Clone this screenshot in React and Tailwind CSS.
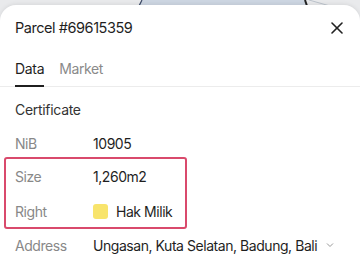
export default function App() {
  return (
    <div className="relative w-[360px] h-[270px] overflow-hidden bg-[#e9eaec]" style={{ fontFamily: "Inter, 'Noto Sans', sans-serif" }}>
      <svg className="absolute left-0 top-0" width="360" height="12" viewBox="0 0 360 12">
        <polygon points="143,0 305,0 308,6 138,6" fill="#cdd6e2" />
        <line x1="142" y1="0" x2="138" y2="8" stroke="#3b4a66" strokeWidth="1.2" />
        <line x1="305" y1="0" x2="307" y2="6" stroke="#222" strokeWidth="2" />
        <line x1="309" y1="0" x2="330" y2="6" stroke="#bcc3cc" strokeWidth="1" />
      </svg>
      <div className="absolute left-0 right-0 top-[5px] bottom-0 bg-white rounded-t-[16px] shadow-[0_-1px_4px_rgba(0,0,0,0.08)]">
        <div className="flex items-center justify-between pl-[15px] pr-[17px] h-[46px]">
          <span className="text-[14.5px] text-[#1f1f1f] tracking-[-0.45px]">Parcel #69615359</span>
          <svg width="12" height="12" viewBox="0 0 12 12" stroke="#222" strokeWidth="1.6" strokeLinecap="round">
            <line x1="1" y1="1" x2="11" y2="11" />
            <line x1="11" y1="1" x2="1" y2="11" />
          </svg>
        </div>
        <div className="flex gap-[15px] px-[15px] pt-[8px] border-b border-[#ececec]">
          <div className="flex flex-col">
            <span className="text-[14px] text-[#1f1f1f] leading-[20px] tracking-[-0.3px]">Data</span>
            <div className="h-[2px] bg-[#1f1f1f] mt-[6px] mb-[-1px]" />
          </div>
          <span className="text-[14px] text-[#8a8a8a] leading-[20px] tracking-[-0.4px]">Market</span>
        </div>
        <div className="px-[15px] pt-[13px] text-[14px] text-[#333] leading-[20px] tracking-[-0.3px]">Certificate</div>
        <div className="flex items-center pl-[15px] mt-[13px] h-[20px] text-[14px] tracking-[-0.45px]">
          <span className="w-[78px] text-[#888]">NiB</span>
          <span className="text-[#1f1f1f]">10905</span>
        </div>
        <div className="ml-[4px] mt-[4px] w-[183px] h-[72px] border-[2px] border-[#d94a6c] rounded-[3px] flex flex-col">
          <div className="flex items-center pl-[9px] mt-[7px] h-[20px] text-[14px] tracking-[-0.45px]">
            <span className="w-[78px] text-[#888]">Size</span>
            <span className="text-[#1f1f1f]">1,260m2</span>
          </div>
          <div className="flex items-center pl-[9px] mt-[15px] h-[20px] text-[14px] tracking-[-0.45px]">
            <span className="w-[78px] text-[#888]">Right</span>
            <span className="w-[15px] h-[15px] rounded-[3px] bg-[#f8e46c] mr-[8px]" />
            <span className="text-[#1f1f1f]">Hak Milik</span>
          </div>
        </div>
        <div className="flex items-center pl-[15px] mt-[6px] h-[20px] text-[14px] tracking-[-0.45px]">
          <span className="w-[78px] text-[#888]">Address</span>
          <span className="text-[#1f1f1f]">Ungasan, Kuta Selatan, Badung, Bali</span>
          <svg className="ml-[9px]" width="8" height="6" viewBox="0 0 8 6" fill="none" stroke="#999" strokeWidth="1">
            <polyline points="1,1.5 4,4.5 7,1.5" />
          </svg>
        </div>
      </div>
    </div>
  );
}
